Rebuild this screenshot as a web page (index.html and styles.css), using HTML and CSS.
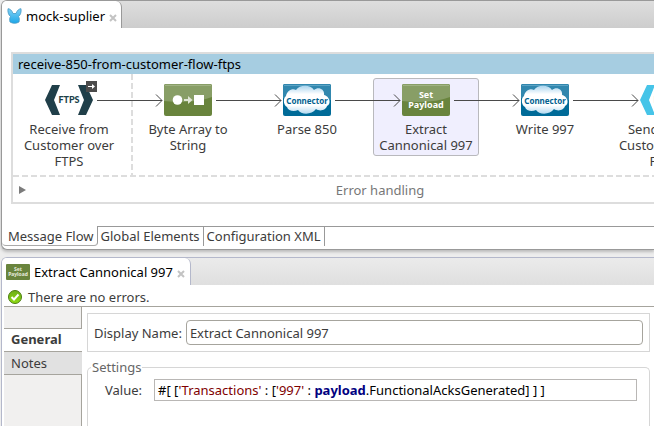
FILE: index.html
```html
<!DOCTYPE html>
<html lang="en">
<head>
<meta charset="utf-8">
<title>mock-suplier</title>
<link rel="stylesheet" href="styles.css">
</head>
<body>
<svg class="defs" aria-hidden="true">
  <defs>
    <linearGradient id="cloudFill" x1="0" y1="0" x2="0" y2="1">
      <stop offset="0" stop-color="#a9d4ee"/><stop offset=".3" stop-color="#fff"/><stop offset=".7" stop-color="#fff"/><stop offset="1" stop-color="#b4daf0"/>
    </linearGradient>
    <linearGradient id="bunnyFill" x1="0" y1="0" x2="0" y2="1">
      <stop offset="0" stop-color="#7fd0f5"/><stop offset="1" stop-color="#1da7e8"/>
    </linearGradient>
    <linearGradient id="okFill" x1="0" y1="0" x2="0" y2="1">
      <stop offset="0" stop-color="#6fae1c"/><stop offset="1" stop-color="#8fdc10"/>
    </linearGradient>
    <symbol id="arrow" viewBox="0 0 67 14">
      <path d="M0 7.5H65M59 1.5L65 7.5L59 13.5" fill="none" stroke="#4a4a4a"/>
    </symbol>
    <symbol id="connector" viewBox="0 0 48 32">
      <rect width="48" height="32" rx="2" fill="#006b98"/>
      <path d="M2 0H46Q48 0 48 2V16Q24 23 0 14V2Q0 0 2 0Z" fill="#3187ae"/>
      <path d="M1 1.5H47" stroke="#5ba3c4"/>
      <path d="M4 23C0 21 0 14 3 12C4 7 9 4 13 6C16 1 27 0 31 6C36 2 42 6 41 11C46 12 49 19 44 22C43 26 37 28 33 25C29 31 18 31 15 26C11 28 5 27 4 23Z" fill="url(#cloudFill)"/>
      <text x="24" y="20" text-anchor="middle" class="connector-text">Connector</text>
    </symbol>
    <symbol id="green" viewBox="0 0 48 32">
      <rect width="48" height="32" rx="2" fill="#69843d"/>
      <path d="M2 0H46Q48 0 48 2V13Q30 20 0 17V2Q0 0 2 0Z" fill="#889e66"/>
      <path d="M1 1.5H47" stroke="#a0b283"/>
    </symbol>
  </defs>
</svg>

<main class="workbench">
  <section class="panel editor">
    <header class="tabbar">
      <div class="tab">
        <svg class="bunny" width="15" height="16" viewBox="0 0 15 16"><path d="M1 .7C3 .8 5 2.500 6 5.500H9C10 2.500 12 .8 14 .7C14.500 4 13.500 7 11.500 8.500C12.500 10 12.500 12 12 14C9 15.800 6 15.800 3 14C2.500 12 2.500 10 3.500 8.500C1.500 7 .5 4 1 .7Z" fill="url(#bunnyFill)" stroke="#4698c4" stroke-width=".8"/></svg>
        <span>mock-suplier</span>
        <button class="close" aria-label="Close mock-suplier"><svg width="8" height="8" viewBox="0 0 8 8"><path d="M1 1L7 7M7 1L1 7" stroke="#c3c3c3" stroke-width="2"/></svg></button>
      </div>
    </header>

    <div class="canvas">
      <div class="flow">
        <h2 class="flow-title">receive-850-from-customer-flow-ftps</h2>
        <div class="steps">
          <div class="step source">
            <div class="card">
              <svg class="icon" width="48" height="32" viewBox="0 0 48 32"><path d="M7 1H15L9 16L15 31H7L0 16ZM33 1H41L48 16L41 31H33L39 16Z" fill="#203f49"/><text x="24" y="19" text-anchor="middle" class="ftps-text">FTPS</text></svg>
              <svg class="badge" width="11" height="11" viewBox="0 0 11 11"><rect width="11" height="11" fill="#4b4b4b"/><path d="M2 5.500H8" stroke="#fff"/><path d="M6 3L9 5.500L6 8Z" fill="#fff"/></svg>
              <span>Receive from Customer over FTPS</span>
            </div>
            <svg class="link"><use href="#arrow"/></svg>
          </div>
          <div class="step">
            <div class="card">
              <svg class="icon" width="48" height="32" viewBox="0 0 48 32"><use href="#green"/><circle cx="13.500" cy="16" r="4.800" fill="#fff"/><path d="M20 16H26" stroke="#dfe5d4" stroke-width="2"/><path d="M24 12L28.500 16L24 20Z" fill="#dfe5d4"/><rect x="30" y="11" width="10" height="10" fill="#fff"/></svg>
              <span>Byte Array to String</span>
            </div>
            <svg class="link"><use href="#arrow"/></svg>
          </div>
          <div class="step">
            <div class="card">
              <svg class="icon" width="48" height="32"><use href="#connector"/></svg>
              <span>Parse 850</span>
            </div>
            <svg class="link"><use href="#arrow"/></svg>
          </div>
          <div class="step">
            <div class="card selected">
              <svg class="icon" width="48" height="32" viewBox="0 0 48 32"><use href="#green"/><text x="24" y="14" text-anchor="middle" class="payload-text">Set</text><text x="24" y="24" text-anchor="middle" class="payload-text">Payload</text></svg>
              <span>Extract Cannonical 997</span>
            </div>
            <svg class="link"><use href="#arrow"/></svg>
          </div>
          <div class="step">
            <div class="card">
              <svg class="icon" width="48" height="32"><use href="#connector"/></svg>
              <span>Write 997</span>
            </div>
            <svg class="link"><use href="#arrow"/></svg>
          </div>
          <div class="step">
            <div class="card">
              <svg class="icon" width="48" height="32" viewBox="0 0 48 32"><path d="M7 1H15L9 16L15 31H7L0 16ZM33 1H41L48 16L41 31H33L39 16Z" fill="#46c4e8"/><text x="24" y="19" text-anchor="middle" class="ftps-text light">FTPS</text></svg>
              <span>Send 997 to Customer over FTPS</span>
            </div>
          </div>
        </div>
        <div class="errors">
          <svg width="7" height="8" viewBox="0 0 7 8"><path d="M0 0L7 4L0 8Z" fill="#7b7b7b"/></svg>
          <span>Error handling</span>
        </div>
      </div>
    </div>

    <nav class="pages">
      <button class="page current">Message Flow</button>
      <button class="page">Global Elements</button>
      <button class="page">Configuration XML</button>
    </nav>
  </section>

  <section class="panel properties">
    <header class="tabbar">
      <div class="tab">
        <svg width="24" height="16" viewBox="0 0 24 16"><rect width="24" height="16" rx="1" fill="#69843d"/><text x="12" y="7" text-anchor="middle" class="mini-text">Set</text><text x="12" y="12" text-anchor="middle" class="mini-text">Payload</text></svg>
        <span>Extract Cannonical 997</span>
        <button class="close" aria-label="Close Extract Cannonical 997"><svg width="8" height="8" viewBox="0 0 8 8"><path d="M1 1L7 7M7 1L1 7" stroke="#c3c3c3" stroke-width="2"/></svg></button>
      </div>
    </header>
    <p class="status">
      <svg width="14" height="14" viewBox="0 0 14 14"><circle cx="7" cy="7" r="6.500" fill="url(#okFill)" stroke="#4c7d12"/><path d="M3.500 7L6 9.500L10.500 4.500" fill="none" stroke="#fff" stroke-width="2"/></svg>
      There are no errors.
    </p>
    <div class="body">
      <nav class="side">
        <button class="side-item current">General</button>
        <button class="side-item">Notes</button>
      </nav>
      <form class="form">
        <div class="name-row">
          <label for="name">Display Name:</label>
          <input id="name" type="text" value="Extract Cannonical 997">
        </div>
        <fieldset class="settings">
          <legend>Settings</legend>
          <div class="value-row">
            <span id="value-label">Value:</span>
            <div class="expression" role="textbox" contenteditable="true" spellcheck="false" aria-labelledby="value-label">#[ [<span class="string">'Transactions'</span> : [<span class="string">'997'</span> : <b class="keyword">payload</b>.FunctionalAcksGenerated] ] ]</div>
          </div>
        </fieldset>
      </form>
    </div>
  </section>
</main>
</body>
</html>
```
FILE: styles.css
```css
* { box-sizing: border-box; }

body {
  margin: 0;
  background: #ededed;
  color: #3c3c3c;
  font: 13px/16px "Noto Sans", "Open Sans", sans-serif;
  overflow: hidden;
}

button, input { font: inherit; color: inherit; }
button { background: none; border: 0; padding: 0; cursor: pointer; }
.defs { position: absolute; width: 0; height: 0; }

.workbench {
  display: flex;
  flex-direction: column;
  gap: 7px;
  min-height: 100vh;
  padding-left: 1px;
}

.panel {
  display: flex;
  flex-direction: column;
  background: #fff;
  border: 1px solid #999;
  border-right: 0;
  border-radius: 6px 0 0 6px;
}

.editor { box-shadow: 0 2px 3px #bbb; }
.properties {
  flex: 1;
  border-color: #b4b8cb;
  border-bottom: 0;
  border-radius: 6px 0 0 0;
}

.tabbar {
  display: flex;
  height: 27px;
  border-radius: 5px 0 0 0;
  background: linear-gradient(#dedede, #cdcdcd);
}
.properties .tabbar { background: linear-gradient(#ebebeb, #dfdfdf); }

.tab {
  display: flex;
  align-items: center;
  gap: 4px;
  padding: 2px 4px 0 5px;
  background: #fff;
  border-right: 1px solid #999;
  border-radius: 5px 6px 0 0;
  color: #000;
  white-space: nowrap;
}
.properties .tab { border-color: #b4b8cb; padding: 0 5px 0 4px; }
.close { display: flex; padding-top: 4px; }

.canvas { padding: 24px 0 22px 9px; overflow: hidden; }

.flow {
  width: max-content;
  min-width: 100%;
  border: 2px solid #ddd;
}

.flow-title {
  margin: 0;
  padding: 2px 5px;
  background: #a6cde1;
  color: #000;
  font-size: 13px;
  font-weight: 400;
  line-height: 16px;
}

.steps { display: flex; height: 101px; padding-right: 20px; }

.step {
  position: relative;
  flex: 0 0 119px;
  padding: 4px 10px 0 3px;
}
.source {
  background: repeating-linear-gradient(#ddd 0 6px, transparent 6px 9px) right / 2px 100% no-repeat;
}
.source { flex-basis: 120px; margin-right: -1px; padding-right: 11px; }

.card {
  position: relative;
  display: flex;
  flex-direction: column;
  align-items: center;
  gap: 5px;
  padding: 5px 3px 2px;
  border: 1px solid transparent;
  border-radius: 3px;
  text-align: center;
}
.selected { background: #f0effe; border-color: #b9b9bd; }
.icon { flex: none; }
.badge { position: absolute; top: 2px; right: 24px; }

.link {
  position: absolute;
  top: 19px;
  left: 84px;
  z-index: 1;
  width: 67px;
  height: 14px;
}

.errors {
  display: flex;
  align-items: center;
  height: 27px;
  padding: 2px 0 0 6px;
  background: repeating-linear-gradient(90deg, #ddd 0 6px, transparent 6px 9px) top / 100% 2px no-repeat;
  color: #777;
}
.errors span { flex: 1; padding-right: 13px; text-align: center; }

.pages {
  display: flex;
  height: 23px;
  background: linear-gradient(#999, #999) top / 100% 1px no-repeat;
}
.page {
  height: 20px;
  padding: 0 3px;
  border-right: 1px solid #999;
  white-space: nowrap;
}
.page.current {
  padding-left: 6px;
  background: #fff;
  border-bottom: 1px solid #aaa;
  border-radius: 0 0 4px 4px;
}

.status {
  display: flex;
  align-items: center;
  gap: 6px;
  height: 22px;
  margin: 0 0 0 2px;
  padding: 2px 0 0 4px;
  border-bottom: 1px solid #a6a49d;
}

.body { display: flex; flex: 1; padding-left: 2px; }

.side {
  display: flex;
  flex-direction: column;
  flex: 0 0 78px;
  padding-top: 21px;
  background: #f1f0ef;
  border-right: 1px solid #a6a49d;
}
.side-item {
  height: 23px;
  margin-right: -1px;
  padding: 0 0 1px 7px;
  text-align: left;
  background: #e1e1e1;
  border-bottom: 1px solid #a6a49d;
}
.side-item.current {
  height: 24px;
  padding-bottom: 2px;
  background: #fff;
  border-top: 1px solid #a6a49d;
  font-weight: 700;
}

.form {
  display: flex;
  flex-direction: column;
  flex: 1;
  gap: 7px;
  padding: 6px 4px 0 5px;
}

.name-row {
  display: flex;
  align-items: center;
  gap: 4px;
  padding: 6px;
  border: 1px solid #d6d6d6;
}
.name-row label { white-space: nowrap; }
.name-row input {
  flex: 1;
  min-width: 0;
  height: 25px;
  padding: 0 3px;
  background: #fff;
  border: 1px solid #a6a49d;
  border-radius: 4px;
}

.settings {
  flex: 1;
  margin: 0;
  padding: 4px 12px 0 17px;
  border: 1px solid #d6d6d6;
  border-bottom: 0;
  border-radius: 5px 5px 0 0;
}
.settings legend { margin-left: -14px; padding: 0 1px; color: #666; }

.value-row { display: flex; align-items: center; gap: 12px; }
.expression {
  flex: 1;
  height: 22px;
  padding: 2px 3px;
  border: 1px solid #b9b7b5;
  color: #000;
  white-space: nowrap;
  overflow: hidden;
}
.string { color: #800000; }
.keyword { color: #000080; }

.ftps-text { font: 900 9px "Lato", sans-serif; fill: #203f49; }
.ftps-text.light { fill: #bbb; }
.payload-text { font: 700 9px "Noto Sans", sans-serif; fill: #fff; }
.connector-text { font: 700 8px "Noto Sans", sans-serif; fill: #00618f; }
.mini-text { font: 700 5px "Noto Sans", sans-serif; fill: #e6ebdc; }
```
